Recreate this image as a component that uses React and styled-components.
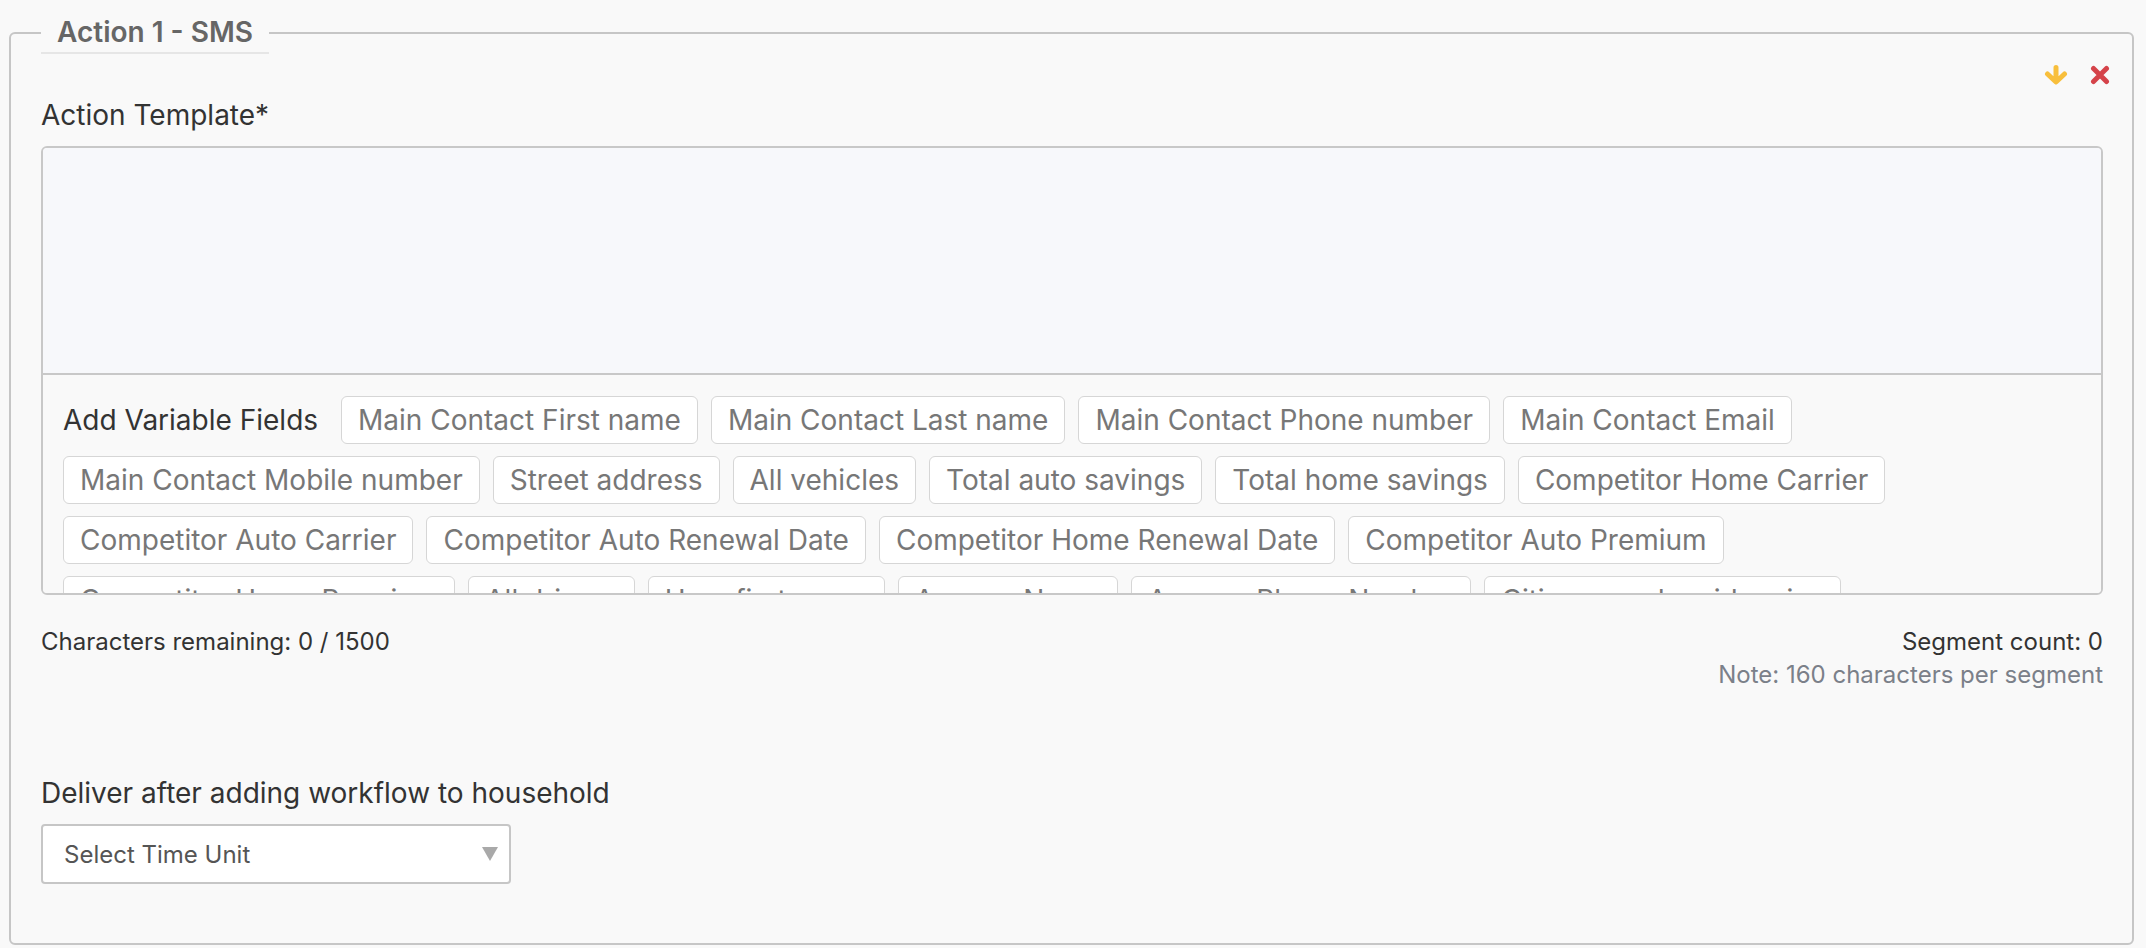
import React from 'react';
import styled, { createGlobalStyle } from 'styled-components';

const GlobalStyle = createGlobalStyle`
  html, body {
    margin: 0;
    background: #f9f9f9;
    font-family: Inter, "Noto Sans", sans-serif;
  }
  body {
    padding: 12px 12px 0 9px;
  }
`;

const Fieldset = styled.fieldset`
  margin: 0;
  min-width: 0;
  border: 2px solid #c6c6c6;
  border-radius: 6px;
  padding: 0 29px 59px 30px;
`;

const Legend = styled.legend`
  padding: 0 16px;
  font-size: 28px;
  line-height: 40px;
  font-weight: 600;
  color: #666;
  border-bottom: 2px solid #e6e6e6;
`;

const Tools = styled.div`
  display: flex;
  justify-content: flex-end;
  align-items: center;
  gap: 21px;
  height: 24px;
  margin: 9px -7px 0 0;
  svg {
    display: block;
    cursor: pointer;
  }
`;

const Label = styled.div`
  font-size: 28px;
  line-height: 32px;
  color: #333;
  margin-top: ${p => p.$top || 0}px;
  margin-bottom: 15px;
`;

const Editor = styled.div`
  display: flex;
  flex-direction: column;
  height: 449px;
  box-sizing: border-box;
  border: 2px solid #c8c8c8;
  border-radius: 6px;
  overflow: hidden;
`;

const TextArea = styled.textarea`
  display: block;
  flex: none;
  width: 100%;
  height: 227px;
  box-sizing: border-box;
  margin: 0;
  border: none;
  border-bottom: 2px solid #c8c8c8;
  background: #f7f8fb;
  resize: none;
  outline: none;
  font: inherit;
`;

const Variables = styled.div`
  flex: 1;
  display: flex;
  flex-wrap: wrap;
  align-items: center;
  align-content: flex-start;
  gap: 12px 13px;
  padding: 21px 20px;
  background: #f9f9f9;
`;

const VarLabel = styled.span`
  font-size: 28px;
  color: #333;
  margin-right: 10px;
`;

const Chip = styled.button`
  height: 48px;
  padding: 0 16px;
  border: 1.5px solid #d6d6d6;
  border-radius: 6px;
  background: #fff;
  color: #777;
  font-family: inherit;
  font-size: 28px;
  cursor: pointer;
`;

const Footer = styled.div`
  display: flex;
  justify-content: space-between;
  margin-top: 30px;
  font-size: 24px;
  line-height: 33px;
  color: #333;
`;

const Counts = styled.div`
  text-align: right;
`;

const Note = styled.div`
  color: #7b8089;
`;

const Select = styled.div`
  display: flex;
  align-items: center;
  justify-content: space-between;
  width: 470px;
  height: 60px;
  box-sizing: border-box;
  padding: 0 10px 0 21px;
  border: 2px solid #c6c6c6;
  border-radius: 4px;
  background: #fff;
  font-size: 24px;
  color: #555;
  cursor: pointer;
`;

const fields = [
  'Main Contact First name',
  'Main Contact Last name',
  'Main Contact Phone number',
  'Main Contact Email',
  'Main Contact Mobile number',
  'Street address',
  'All vehicles',
  'Total auto savings',
  'Total home savings',
  'Competitor Home Carrier',
  'Competitor Auto Carrier',
  'Competitor Auto Renewal Date',
  'Competitor Home Renewal Date',
  'Competitor Auto Premium',
  'Competitor Home Premium',
  'All drivers',
  'User first name',
  'Agency Name',
  'Agency Phone Number',
  'Citizens and residencies',
];

const ArrowDown = () => (
  <svg width="26" height="20" viewBox="0 0 26 20">
    <path d="M13 2.5V16.5M4.5 9L13 17L21.5 9" fill="none" stroke="#f8bf3c" strokeWidth="5" strokeLinecap="round" strokeLinejoin="round" />
  </svg>
);

const Close = () => (
  <svg width="20" height="20" viewBox="0 0 20 20">
    <path d="M3.5 3.5L16.5 16.5M16.5 3.5L3.5 16.5" fill="none" stroke="#d5434a" strokeWidth="5" strokeLinecap="round" />
  </svg>
);

const Caret = () => (
  <svg width="18" height="16" viewBox="0 0 18 16">
    <path d="M1 1H17L9 15Z" fill="#a9a9a9" />
  </svg>
);

export default function App() {
  return (
    <>
      <GlobalStyle />
      <Fieldset>
        <Legend>Action 1 - SMS</Legend>
        <Tools>
          <ArrowDown />
          <Close />
        </Tools>
        <Label $top={12}>Action Template*</Label>
        <Editor>
          <TextArea />
          <Variables>
            <VarLabel>Add Variable Fields</VarLabel>
            {fields.map(f => (
              <Chip key={f} type="button">{f}</Chip>
            ))}
          </Variables>
        </Editor>
        <Footer>
          <div>Characters remaining: 0 / 1500</div>
          <Counts>
            <div>Segment count: 0</div>
            <Note>Note: 160 characters per segment</Note>
          </Counts>
        </Footer>
        <Label $top={86}>Deliver after adding workflow to household</Label>
        <Select>
          <span>Select Time Unit</span>
          <Caret />
        </Select>
      </Fieldset>
    </>
  );
}
